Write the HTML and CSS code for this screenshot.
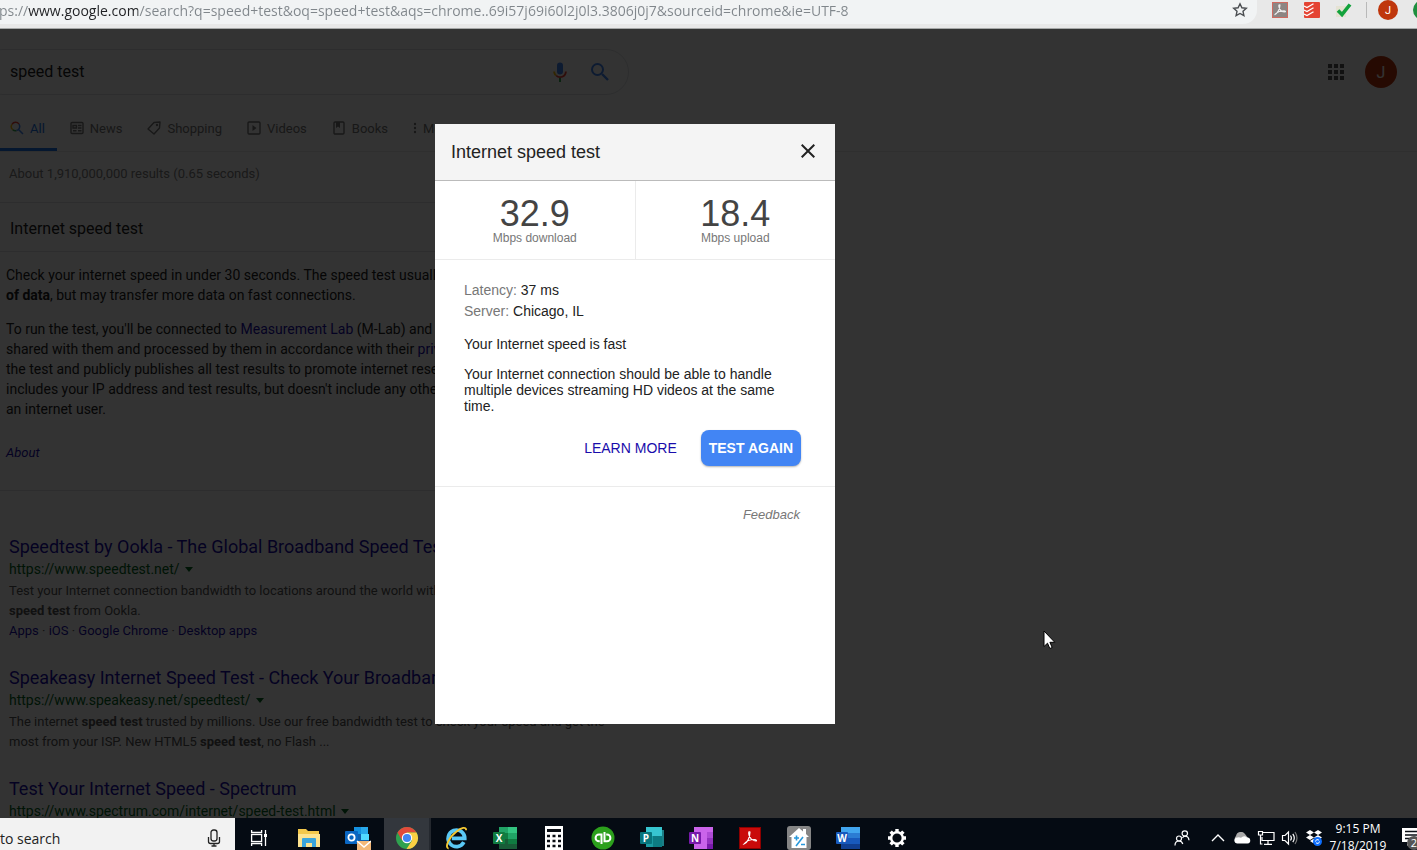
FILE: index.html
```html
<!DOCTYPE html>
<html lang="en">
<head>
    <meta charset="UTF-8">
    <meta name="viewport" content="width=device-width, initial-scale=1.0">
    <title>speed test - Google Search</title>
    <link rel="stylesheet" href="styles.css">
</head>
<body>

    <!-- Browser toolbar -->
    <div class="toolbar">
        <div class="omnibox">
            <input class="url" type="text" aria-label="Address bar" value="tps://www.google.com/search?q=speed+test&amp;oq=speed+test&amp;aqs=chrome..69i57j69i60l2j0l3.3806j0j7&amp;sourceid=chrome&amp;ie=UTF-8">
            <button class="star" aria-label="Bookmark this page">
                <svg width="16" height="16" viewBox="0 0 16 16"><path d="M8 1.8l1.9 4 4.4.5-3.3 3 .9 4.4L8 11.5l-3.9 2.2.9-4.4-3.3-3 4.4-.5z" fill="none" stroke="#4a4d51" stroke-width="1.4"/></svg>
            </button>
        </div>
        <div class="extensions">
            <button class="ext" aria-label="Acrobat">
                <svg width="16" height="16" viewBox="0 0 16 16"><rect x=".5" y=".5" width="15" height="15" fill="#8d8583" stroke="#cf6a60"/><path d="M3 12.5c2-1 5-5 5-9.5-1-1-1.5.5-1 2 .8 3 3.5 5 6 5 1 0 .5-1.2-1-1.2-3 0-6.5 1.2-8.5 3.2-.5.5-.8.8-.5.5z" fill="none" stroke="#eee" stroke-width="1.1"/></svg>
            </button>
            <button class="ext" aria-label="Todoist">
                <svg width="16" height="16" viewBox="0 0 16 16"><rect width="16" height="16" rx="1" fill="#e44332"/><path d="M0 4l3 1.5 6.5-3.7M0 8l3 1.5 6.5-3.7M0 12l3 1.5 6.5-3.7" fill="none" stroke="#fff" stroke-width="1.3"/></svg>
            </button>
            <button class="ext" aria-label="Checker">
                <svg width="18" height="16" viewBox="0 0 18 16"><path d="M1 4h10v11H1z" fill="#e5e2d3"/><path d="M3 8.5l4 4 8-10" fill="none" stroke="#12a23c" stroke-width="3.6"/></svg>
            </button>
            <span class="divider"></span>
            <button class="profile" aria-label="Profile">J</button>
            <span class="update"></span>
        </div>
    </div>

    <!-- Search page -->
    <main class="page">
        <header class="header">
            <div class="header-top">
                <form class="search-box">
                    <input type="text" name="q" aria-label="Search" value="speed test">
                    <button type="button" aria-label="Search by voice">
                        <svg width="24" height="24" viewBox="0 0 24 24"><path d="M12 14.5a3 3 0 0 0 3-3v-6a3 3 0 0 0-6 0v6a3 3 0 0 0 3 3z" fill="#4285f4"/><path d="M11 18h2v4h-2z" fill="#34a853"/><path d="M7.5 16c1.2 1.2 2.8 2 4.5 2 3.9 0 6.8-2.8 6.8-6.5h-1.9c0 2.9-2.2 4.8-4.900 4.800-1.300 0-2.400-.5-3.300-1.400z" fill="#ea4335"/><path d="M5.2 11.5c0 1.8.8 3.4 2.2 4.6l1.3-1.3c-1-.8-1.6-2-1.6-3.300z" fill="#fbbc05"/></svg>
                    </button>
                    <button type="submit" aria-label="Google Search">
                        <svg width="24" height="24" viewBox="0 0 24 24"><circle cx="9.5" cy="9.5" r="5.5" fill="none" stroke="#4285f4" stroke-width="2"/><path d="M14 14l6 6" stroke="#4285f4" stroke-width="2.4"/></svg>
                    </button>
                </form>
                <div class="account">
                    <button aria-label="Google apps">
                        <svg width="16" height="16" viewBox="0 0 16 16" fill="#555"><path d="M0 0h4v4H0zM6 0h4v4H6zM12 0h4v4h-4zM0 6h4v4H0zM6 6h4v4H6zM12 6h4v4h-4zM0 12h4v4H0zM6 12h4v4H6zM12 12h4v4h-4z"/></svg>
                    </button>
                    <button class="avatar" aria-label="Google Account">J</button>
                </div>
            </div>
            <nav class="tabs">
                <a href="#" class="active">
                    <svg width="14" height="14" viewBox="0 0 14 14" fill="none" stroke-width="1.5"><path d="M2 3.300a4.200 4.200 0 0 1 7-.2" stroke="#ea4335"/><path d="M2 3.300a4.200 4.200 0 0 0 .8 5.500" stroke="#fbbc05"/><path d="M2.800 8.800a4.200 4.200 0 0 0 3.700.8" stroke="#34a853"/><path d="M6.500 9.600a4.200 4.200 0 0 0 2.500-6.500M8.500 8.500L13 13" stroke="#4285f4"/></svg>
                    All
                </a>
                <a href="#">
                    <svg width="14" height="14" viewBox="0 0 14 14" fill="none" stroke="#777" stroke-width="1.4"><rect x="1" y="1.5" width="12" height="11" rx="1"/><path d="M3 4.5h3.5v2.500H3zM8 4.500h3.500M8 7h3.500M3 9.700h3.500M8 9.700h3.500"/></svg>
                    News
                </a>
                <a href="#">
                    <svg width="14" height="14" viewBox="0 0 14 14" fill="none" stroke="#777" stroke-width="1.4"><path d="M7 1.500L13 1l-.5 6L7 13 1 8z" stroke-linejoin="round"/><circle cx="10" cy="4" r=".5"/></svg>
                    Shopping
                </a>
                <a href="#">
                    <svg width="14" height="14" viewBox="0 0 14 14"><rect x="1" y="1" width="12" height="12" rx="1" fill="none" stroke="#777" stroke-width="1.4"/><path d="M5.500 4v6l4-3z" fill="#777"/></svg>
                    Videos
                </a>
                <a href="#">
                    <svg width="14" height="14" viewBox="0 0 14 14"><rect x="2" y="1" width="10" height="12" rx="1" fill="none" stroke="#777" stroke-width="1.4"/><path d="M4 1h4v6L6 5.500 4 7z" fill="#777"/></svg>
                    Books
                </a>
                <a href="#">
                    <svg width="4" height="14" viewBox="0 0 4 14" fill="#777"><circle cx="2" cy="3" r="1.200"/><circle cx="2" cy="7" r="1.200"/><circle cx="2" cy="11" r="1.200"/></svg>
                    More
                </a>
            </nav>
        </header>

        <div class="stats">About 1,910,000,000 results (0.65 seconds)</div>

        <section class="card">
            <h2>Internet speed test</h2>
            <div class="card-body">
                <p>Check your internet speed in under 30 seconds. The speed test usually transfers <b>less than 40 MB<br>of data</b>, but may transfer more data on fast connections.</p>
                <p>To run the test, you'll be connected to <a href="#">Measurement Lab</a> (M-Lab) and your IP address will be<br>
                    shared with them and processed by them in accordance with their <a href="#">privacy policy</a>. M-Lab conducts<br>
                    the test and publicly publishes all test results to promote internet research. Published information<br>
                    includes your IP address and test results, but doesn't include any other information about you as<br>
                    an internet user.</p>
                <a href="#" class="about">About</a>
            </div>
        </section>

        <div class="results">
            <article class="result">
                <h3><a href="#">Speedtest by Ookla - The Global Broadband Speed Test</a></h3>
                <cite>https://www.speedtest.net/ <i class="arrow"></i></cite>
                <p>Test your Internet connection bandwidth to locations around the world with this interactive<br><b>speed test</b> from Ookla.</p>
                <div class="sitelinks"><a href="#">Apps</a> · <a href="#">iOS</a> · <a href="#">Google Chrome</a> · <a href="#">Desktop apps</a></div>
            </article>
            <article class="result">
                <h3><a href="#">Speakeasy Internet Speed Test - Check Your Broadband Speed</a></h3>
                <cite>https://www.speakeasy.net/speedtest/ <i class="arrow"></i></cite>
                <p>The internet <b>speed test</b> trusted by millions. Use our free bandwidth test to check your speed and get the<br>most from your ISP. New HTML5 <b>speed test</b>, no Flash ...</p>
            </article>
            <article class="result">
                <h3><a href="#">Test Your Internet Speed - Spectrum</a></h3>
                <cite>https://www.spectrum.com/internet/speed-test.html <i class="arrow"></i></cite>
            </article>
        </div>

        <!-- Speed test dialog -->
        <div class="overlay">
            <div class="modal" role="dialog" aria-labelledby="modal-title">
                <div class="modal-header">
                    <h1 id="modal-title">Internet speed test</h1>
                    <button class="close" aria-label="Close">
                        <svg width="14" height="14" viewBox="0 0 14 14"><path d="M.7.7l12.600 12.600M13.300.7L.7 13.300" stroke="#222" stroke-width="2"/></svg>
                    </button>
                </div>
                <div class="speeds">
                    <div class="speed">
                        <div class="number">32.9</div>
                        <div class="unit">Mbps download</div>
                    </div>
                    <div class="speed">
                        <div class="number">18.4</div>
                        <div class="unit">Mbps upload</div>
                    </div>
                </div>
                <div class="details">
                    <div class="row"><span>Latency:</span> 37 ms</div>
                    <div class="row"><span>Server:</span> Chicago, IL</div>
                    <p>Your Internet speed is fast</p>
                    <p>Your Internet connection should be able to handle multiple devices streaming HD videos at the same time.</p>
                    <div class="actions">
                        <a href="#">LEARN MORE</a>
                        <button class="again">TEST AGAIN</button>
                    </div>
                </div>
                <div class="feedback"><a href="#">Feedback</a></div>
            </div>
        </div>

        <svg class="cursor" width="13" height="20" viewBox="0 0 13 20"><path d="M1 1v15.500l3.500-3.300 2.300 5.300 2.400-1-2.300-5.200h4.900z" fill="#fff" stroke="#000" stroke-width="1"/></svg>
    </main>

    <!-- Windows taskbar -->
    <footer class="taskbar">
        <div class="taskbar-row">
            <div class="task-search">
                <input type="text" aria-label="Type here to search" placeholder="to search">
                <button aria-label="Dictate">
                    <svg width="14" height="18" viewBox="0 0 14 18" fill="none" stroke="#222" stroke-width="1.3"><rect x="4" y="1" width="6" height="11" rx="2.500"/><path d="M1.500 8v4.500q0 2 2 2h7q2 0 2-2V8M7 14.500V17M4.500 17h5"/></svg>
                </button>
            </div>
            <div class="apps">
                <button aria-label="Task View">
                    <svg width="24" height="24" viewBox="0 0 24 24" fill="none" stroke="#fff" stroke-width="1.3"><rect x="3.600" y="8.500" width="10" height="7"/><path d="M3.600 4v2.500h10V4M3.600 20v-2.500h10V20M17.500 4v16"/><path d="M16 8h3v3h-3z" fill="#fff" stroke="none"/></svg>
                </button>
                <button aria-label="File Explorer">
                    <svg width="24" height="24" viewBox="0 0 24 24"><path d="M1 3h8l2 2h11v16H1z" fill="#f3c84b"/><path d="M1 8h22v13H1z" fill="#fde38f"/><path d="M5 21v-8q0-1 1-1h12q1 0 1 1v8h-4v-4H9v4z" fill="#3aa5dc"/></svg>
                </button>
                <button aria-label="Outlook">
                    <svg width="26" height="26" viewBox="0 0 26 26"><path d="M9 2h14v9H9z" fill="#1490df"/><path d="M16 2h7v7h-7z" fill="#28a8ea"/><path d="M7 9h17v9H7z" fill="#0f5fae"/><path d="M16 9h8v6h-8z" fill="#50d9ff"/><rect y="6" width="13" height="13" rx="1" fill="#0a66c2"/><circle cx="6.500" cy="12.500" r="3.100" fill="none" stroke="#fff" stroke-width="1.800"/><path d="M12 16h14v10H12z" fill="#f3b878"/><path d="M12 16l7 6 7-6" fill="none" stroke="#fff" stroke-width="1.500"/></svg>
                </button>
                <button class="current" aria-label="Google Chrome">
                    <svg width="24" height="24" viewBox="0 0 24 24"><circle cx="12" cy="12" r="11" fill="#2fa14f"/><path d="M2.500 6.500A11 11 0 0 1 21.500 6.500H12L7 14.500z" fill="#e24a3b"/><path d="M21.500 6.500A11 11 0 0 1 11.500 23L17 14.500 12 6.500z" fill="#fbd043"/><circle cx="12" cy="12" r="5.200" fill="#fff"/><circle cx="12" cy="12" r="4.100" fill="#4285f4"/></svg>
                </button>
                <button aria-label="Internet Explorer">
                    <svg width="24" height="24" viewBox="0 0 26 26"><path d="M21.500 17.500A9 9 0 1 1 22.500 13.500H8.500" fill="none" stroke="#5ac8f5" stroke-width="4"/><path d="M5 24.500c-5-1 1-13 8-18 6-5 11-6 11-2" fill="none" stroke="#f5c832" stroke-width="2"/></svg>
                </button>
                <button aria-label="Excel">
                    <svg class="office" width="24" height="24" viewBox="0 0 24 24"><path d="M6 1h18v22H6z" fill="#21a366"/><path d="M15 1h9v6h-9z" fill="#33c481"/><path d="M6 7h9v6H6z" fill="#107c41"/><path d="M6 13h18v10H6z" fill="#185c37"/><path d="M15 13h9v5h-9z" fill="#107c41"/><rect y="6" width="12" height="12" rx="1" fill="#107c41"/><text x="6" y="16">X</text></svg>
                </button>
                <button aria-label="Calculator">
                    <svg width="18" height="24" viewBox="0 0 18 24"><path d="M0 0h18v24H0z" fill="#fff"/><path d="M2 3h14v3H2z" fill="#0a0e14"/><path d="M2 10h14M2 15h14M2 20h14" stroke="#0a0e14" stroke-width="2.500" stroke-dasharray="3 2.500"/></svg>
                </button>
                <button aria-label="QuickBooks">
                    <svg width="24" height="24" viewBox="0 0 24 24"><circle cx="12" cy="12" r="11.500" fill="#2ca01c"/><path d="M10.500 18V8.500H8a3.400 3.400 0 0 0 0 6.800h.8M13.500 6v9.300H16a3.400 3.400 0 0 0 0-6.800h-.8" fill="none" stroke="#fff" stroke-width="2"/></svg>
                </button>
                <button aria-label="Publisher">
                    <svg class="office" width="24" height="24" viewBox="0 0 24 24"><path d="M16 4h8v16h-8z" fill="#1b7f86"/><path d="M6 1h16v20H6z" fill="#1a9ba1"/><path d="M6 1h16v9H6z" fill="#37c6d0"/><path d="M13 10h9v11h-9z" fill="#0d7c82"/><rect y="6" width="12" height="12" rx="1" fill="#07757c"/><text x="6" y="16">P</text></svg>
                </button>
                <button aria-label="OneNote">
                    <svg class="office" width="24" height="24" viewBox="0 0 24 24"><path d="M5 1h19v22H5z" fill="#ca64ea"/><path d="M18 6h6v6h-6z" fill="#ae4bd5"/><path d="M18 12h6v6h-6z" fill="#9332bf"/><path d="M18 18h6v5h-6z" fill="#7719aa"/><rect y="6" width="12" height="12" rx="1" fill="#7719aa"/><text x="6" y="16">N</text></svg>
                </button>
                <button aria-label="Adobe Acrobat">
                    <svg width="22" height="22" viewBox="0 0 22 22"><rect x=".5" y=".5" width="21" height="21" fill="#c90a0a" stroke="#8d0000"/><path d="M5 17c3-1 6-6 6-12-1.500-1-1.500 1-1 3 1 3.500 4 6 7 6 1 0 .5-1.500-1.500-1.500-4 0-8 1-10.500 4.500z" fill="none" stroke="#fff" stroke-width="1.100"/></svg>
                </button>
                <button aria-label="Home calculator">
                    <svg width="24" height="24" viewBox="0 0 24 24"><rect width="24" height="24" rx="3" fill="#858585"/><path d="M12 2l-10 9h2.500v11h15V11H22l-3-3V3h-3v2.500z" fill="#fff"/><path d="M7 12h5M9.500 9.500v5M14 18.500h4M9 20l7-9" fill="none" stroke="#2899dc" stroke-width="1.600"/></svg>
                </button>
                <button aria-label="Word">
                    <svg class="office" width="24" height="24" viewBox="0 0 24 24"><path d="M5 1h19v22H5z" fill="#2b7cd3"/><path d="M5 1h19v6H5z" fill="#41a5ee"/><path d="M5 12h19v6H5z" fill="#185abd"/><path d="M5 18h19v5H5z" fill="#103f91"/><rect y="6" width="12" height="12" rx="1" fill="#185abd"/><text x="6" y="16">W</text></svg>
                </button>
                <button aria-label="Settings">
                    <svg width="22" height="22" viewBox="0 0 22 22" fill="none" stroke="#fff"><circle cx="11" cy="11" r="5.800" stroke-width="2.400"/><path d="M11 2v3M11 17v3M2 11h3M17 11h3M4.600 4.600l2.200 2.200M15.200 15.200l2.200 2.200M4.600 17.400l2.200-2.200M15.200 6.800l2.200-2.200" stroke-width="3.400"/></svg>
                </button>
            </div>
            <div class="tray">
                <button class="people" aria-label="People">
                    <svg width="16" height="16" viewBox="0 0 16 16" fill="none" stroke="#fff" stroke-width="1.200"><circle cx="10.800" cy="3.500" r="2.700"/><circle cx="5" cy="8.500" r="2.500"/><path d="M1 15.500q0-4.500 4-4.500 3 0 3.800 3M8.500 8q1-1.800 2.500-1.800 3.500 0 4 4"/></svg>
                </button>
                <button aria-label="Show hidden icons">
                    <svg width="14" height="10" viewBox="0 0 14 10"><path d="M1 8l6-6 6 6" fill="none" stroke="#fff" stroke-width="1.400"/></svg>
                </button>
                <button aria-label="OneDrive">
                    <svg width="18" height="12" viewBox="0 0 18 12"><path d="M3 9a3.500 3.500 0 0 1 0-5 5 5 0 0 1 9-2l3 4z" fill="#aaa"/><path d="M4 11.500a3 3 0 0 1-1-5.700q3-1 5 0 3-3 6-.3a3 3 0 0 1 .5 6z" fill="#fff"/></svg>
                </button>
                <button aria-label="Network">
                    <svg width="18" height="16" viewBox="0 0 18 16" fill="none" stroke="#fff" stroke-width="1.200"><path d="M6 2.500h11v8H5V7M11 10.500v3.500M7 14.400h8"/><path d="M1.500 1.500h4v3.500h-4zM3.500 5v9h2"/></svg>
                </button>
                <button aria-label="Volume">
                    <svg width="18" height="16" viewBox="0 0 18 16" fill="none" stroke="#fff" stroke-width="1.200"><path d="M1.500 5.500h2.500l3.500-3.500v12L4 10.500H1.500zM9.500 5.500q1.800 2.500 0 5M11.800 3.800q3 4.200 0 8.400"/><path d="M14 2q4 6 0 12" stroke="#777"/></svg>
                </button>
                <button aria-label="Dropbox">
                    <svg width="18" height="18" viewBox="0 0 18 18"><path d="M5 1l4 2.500L5 6 1 3.500zM13 1l4 2.500L13 6 9 3.500zM5 6l4 2.500L5 11 1 8.500zM13 6l4 2.500-4 2.500-4-2.500zM5 12l4-2.500 2 2L8 14z" fill="#fff"/><circle cx="12.500" cy="12.500" r="4.500" fill="#0d6efd"/><path d="M10.500 12.500a2 2 0 0 1 3.500-1.200M14.500 12.500a2 2 0 0 1-3.500 1.200" fill="none" stroke="#fff"/></svg>
                </button>
                <div class="clock">
                    <time>9:15 PM</time>
                    <time>7/18/2019</time>
                </div>
                <button class="notifications" aria-label="2 notifications">
                    <svg width="22" height="24" viewBox="0 0 22 24"><path d="M0 2h20v14H9l-4 4v-4H0z" fill="#fff"/><path d="M3 5.500h14M3 9h14M3 12.500h14" stroke="#0a0e14" stroke-width="1.300"/><circle cx="12" cy="17" r="7" fill="#555"/><text x="12" y="21" font-size="11" text-anchor="middle" fill="#fff">2</text></svg>
                </button>
            </div>
        </div>
    </footer>

</body>
</html>
```
FILE: styles.css
```css
* {
    box-sizing: border-box;
}

body {
    margin: 0;
    height: 100vh;
    display: flex;
    flex-direction: column;
    overflow: hidden;
    font-family: Roboto, Arial, sans-serif;
    font-size: 14px;
    color: #222;
}

button {
    display: flex;
    align-items: center;
    justify-content: center;
    flex: none;
    padding: 0;
    border: none;
    background: none;
    font-family: inherit;
    cursor: pointer;
}

input {
    min-width: 0;
    flex: 1;
    padding: 0;
    border: none;
    outline: none;
    background: none;
    font-family: inherit;
}

svg {
    flex: none;
}

a {
    color: #1a0dab;
    text-decoration: none;
}

h1, h2, h3, p {
    margin: 0;
    font-weight: normal;
}

/* Browser toolbar */
.toolbar {
    flex: none;
    display: flex;
    align-items: flex-start;
    height: 29px;
    background: #e8e8e8;
    border-bottom: 1px solid #a6a8a8;
}

.omnibox {
    flex: 1;
    display: flex;
    height: 24px;
    padding-right: 9px;
    background: #f1f3f4;
    border-bottom-right-radius: 14px;
}

/* host name is darker than the rest of the address */
.url {
    height: 20px;
    margin-left: -6px;
    font-family: "Open Sans", "Noto Sans", sans-serif;
    font-size: 14px;
    color: transparent;
    caret-color: #222;
    background: linear-gradient(to right, #80868b 34px, #202124 34px, #202124 144px, #80868b 144px);
    background-clip: text;
    -webkit-background-clip: text;
}

.star {
    width: 16px;
    height: 20px;
}

.extensions {
    display: flex;
    align-items: center;
    height: 20px;
    padding-left: 7px;
    overflow: hidden;
}

.ext {
    width: 32px;
}

.divider {
    width: 1px;
    height: 16px;
    margin-left: 6px;
    background: #b9b9b9;
}

.profile {
    width: 20px;
    height: 20px;
    margin-left: 11px;
    border-radius: 50%;
    background: #bf360c;
    color: #fff;
    font-size: 11px;
}

.update {
    width: 20px;
    height: 20px;
    margin: 0 -16px 0 15px;
    border-radius: 50%;
    background: #1e8e3e;
}

/* Search page */
.page {
    flex: 1;
    min-height: 0;
    position: relative;
    overflow: hidden;
    background: #fff;
}

.header {
    padding-top: 20px;
    border-bottom: 1px solid #ebebeb;
}

.header-top {
    display: flex;
    justify-content: space-between;
    align-items: center;
}

.search-box {
    display: flex;
    align-items: center;
    width: 649px;
    height: 46px;
    margin-left: -20px;
    padding: 0 8px 0 29px;
    border: 1px solid #dfe1e5;
    border-radius: 24px;
}

.search-box input {
    height: 40px;
    padding-bottom: 2px;
    font-size: 16px;
    color: #222;
}

.search-box button {
    width: 40px;
    height: 40px;
}

.account {
    display: flex;
    align-items: center;
    gap: 21px;
    padding-right: 20px;
}

.avatar {
    width: 32px;
    height: 32px;
    border-radius: 50%;
    background: #bf360c;
    color: #fff;
    font-size: 16px;
}

.tabs {
    display: flex;
    gap: 1px;
    height: 46px;
    margin-top: 10px;
    font-size: 13px;
}

.tabs a {
    display: flex;
    align-items: center;
    gap: 6px;
    padding: 3px 12px 0;
    border-bottom: 3px solid transparent;
    color: #777;
}

.tabs .active {
    padding-left: 10px;
    border-bottom-color: #1a73e8;
    color: #1a73e8;
}

.stats {
    height: 50px;
    padding: 12px 9px 0;
    font-size: 13px;
    line-height: 20px;
    color: #808080;
}

.card {
    width: 652px;
    margin-left: -8px;
    border: 1px solid #dfe1e5;
}

.card h2 {
    padding: 3px 17px 0;
    font-size: 16px;
    line-height: 45px;
    border-bottom: 1px solid #dfe1e5;
}

.card-body {
    padding: 13px 13px 27px;
    line-height: 20px;
    white-space: nowrap;
}

.card-body p + p {
    margin-top: 14px;
}

.about {
    display: block;
    margin-top: 24px;
    font-size: 13px;
    font-style: italic;
}

.results {
    display: flex;
    flex-direction: column;
    gap: 25px;
    padding: 44px 9px 0;
    white-space: nowrap;
}

.result h3 {
    font-size: 18px;
    line-height: 24px;
}

.result cite {
    display: flex;
    align-items: center;
    gap: 5px;
    margin-bottom: 2px;
    font-style: normal;
    line-height: 20px;
    color: #006621;
}

.arrow {
    border: 4px solid transparent;
    border-top: 5px solid #006621;
    border-bottom: none;
}

.result p,
.sitelinks {
    font-size: 13px;
    line-height: 20px;
    color: #545454;
}

/* Speed test dialog */
.overlay {
    position: absolute;
    inset: 0;
    display: flex;
    align-items: center;
    justify-content: center;
    padding-right: 147px;
    background: rgba(0, 0, 0, 0.8);
}

.modal {
    width: 400px;
    height: 600px;
    background: #fff;
    font-family: "Liberation Sans", Arial, sans-serif;
}

.modal-header {
    display: flex;
    align-items: center;
    justify-content: space-between;
    height: 57px;
    padding: 0 20px 0 16px;
    background: #f4f4f4;
    border-bottom: 1px solid #bbb;
}

.modal-header h1 {
    padding-top: 1px;
    font-size: 18px;
}

.close {
    padding-bottom: 2px;
}

.speeds {
    display: flex;
    border-bottom: 1px solid #ebebeb;
}

.speed {
    flex: 1;
    height: 78px;
    padding-top: 13px;
    text-align: center;
}

.speed + .speed {
    border-left: 1px solid #ebebeb;
}

.number {
    font-size: 36px;
    line-height: 40px;
    color: #444;
}

.unit {
    font-size: 12px;
    line-height: 8px;
    color: #777;
}

.details {
    padding: 20px 34px 20px 29px;
    border-bottom: 1px solid #ebebeb;
}

.row {
    line-height: 21px;
}

.row span {
    color: #777;
}

.details p {
    margin-top: 14px;
    line-height: 16px;
}

.actions {
    display: flex;
    align-items: center;
    justify-content: flex-end;
    gap: 24px;
    margin-top: 16px;
}

.again {
    height: 36px;
    padding: 0 8px;
    border-radius: 8px;
    background: #4285f4;
    box-shadow: 0 1px 2px rgba(0, 0, 0, 0.3);
    color: #fff;
    font-size: 14px;
    font-weight: bold;
}

.feedback {
    padding: 20px 35px;
    text-align: right;
    font-size: 13px;
    font-style: italic;
}

.feedback a {
    color: #777;
}

.cursor {
    position: absolute;
    left: 1043px;
    top: 601px;
}

/* Windows taskbar */
.taskbar {
    flex: none;
    height: 32px;
    overflow: hidden;
    background: #050b13;
    color: #fff;
    font-family: "Open Sans", "Noto Sans", sans-serif;
}

.taskbar-row {
    display: flex;
    height: 40px;
}

.task-search {
    display: flex;
    align-items: center;
    width: 235px;
    padding-right: 14px;
    background: #f2f2f2;
}

.task-search input {
    font-size: 14px;
}

.task-search input::placeholder {
    color: #222;
}

.apps {
    display: flex;
}

.apps button {
    width: 49px;
    padding-left: 1px;
}

.apps .current {
    background: #33373d;
    border-left: 2px solid #050b13;
    border-right: 2px solid #24282e;
}

.office text {
    font-size: 10px;
    font-weight: bold;
    text-anchor: middle;
    fill: #fff;
}

.tray {
    display: flex;
    margin-left: auto;
}

.tray button {
    width: 24px;
}

.tray .people {
    width: 48px;
}

.clock {
    width: 64px;
    padding-top: 2px;
    text-align: center;
    font-size: 12px;
    line-height: 17px;
}

.clock time {
    display: block;
}

.tray .notifications {
    width: 27px;
    padding-left: 12px;
    justify-content: flex-start;
    overflow: hidden;
}
```
